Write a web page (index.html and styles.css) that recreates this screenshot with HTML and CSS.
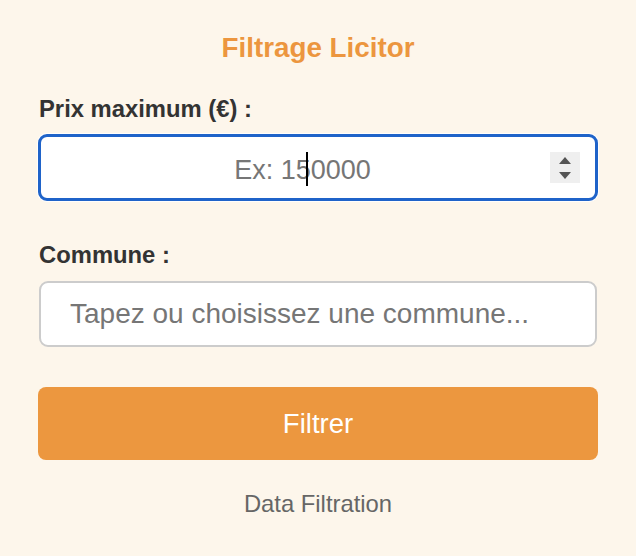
FILE: index.html
```html
<!DOCTYPE html>
<html lang="fr">
<head>
<meta charset="utf-8">
<title>Filtrage Licitor</title>
<link rel="stylesheet" href="styles.css">
</head>
<body>
<main class="panel">
  <h1 class="title">Filtrage Licitor</h1>
  <form class="filter-form">
    <label class="label label-price" for="prix">Prix maximum (€) :</label>
    <div class="field field-focused">
      <input id="prix" class="field-input field-input-center" type="text" placeholder="Ex: 150000">
      <span class="caret"></span>
      <div class="spinner">
        <span class="arrow arrow-up"></span>
        <span class="arrow arrow-down"></span>
      </div>
    </div>
    <label class="label label-commune" for="commune">Commune :</label>
    <div class="field field-plain">
      <input id="commune" class="field-input field-input-left" type="text" placeholder="Tapez ou choisissez une commune...">
    </div>
    <button class="submit" type="button">Filtrer</button>
  </form>
  <p class="footer">Data Filtration</p>
</main>
</body>
</html>
```
FILE: styles.css
```css
html, body {
  margin: 0;
  padding: 0;
  background: #fdf6eb;
}
body {
  font-family: "Liberation Sans", Arial, Helvetica, sans-serif;
  color: #333333;
}
.panel {
  padding: 32px 38px 0 38px;
  display: flex;
  flex-direction: column;
}
.title {
  margin: 0;
  font-size: 27.8px;
  line-height: 32px;
  font-weight: bold;
  color: #ec963f;
  text-align: center;
}
.filter-form {
  display: flex;
  flex-direction: column;
}
.label {
  display: block;
  font-size: 23.8px;
  line-height: 26px;
  font-weight: bold;
  color: #333333;
  padding-left: 1px;
}
.label-price {
  margin-top: 32px;
}
.label-commune {
  margin-top: 41px;
}
.field {
  position: relative;
  box-sizing: border-box;
  display: flex;
  align-items: center;
  background: #ffffff;
  border-radius: 9px;
  margin-top: 12px;
}
.field-focused {
  height: 67px;
  border: 3px solid #1f63c9;
  box-shadow: 0 0 0 1px rgba(255, 255, 255, 0.9);
}
.field-plain {
  height: 66px;
  border: 2px solid #cccccc;
  margin-top: 13px;
  margin-left: 1px;
  margin-right: 1px;
}
.field-input {
  flex: 1;
  min-width: 0;
  border: none;
  outline: none;
  background: transparent;
  font-family: "Liberation Sans", Arial, Helvetica, sans-serif;
  font-size: 27px;
  color: #333333;
  padding: 0;
}
.field-input::placeholder {
  color: #767676;
  opacity: 1;
}
.field-input-center {
  text-align: center;
  padding-left: 14px;
  padding-top: 6px;
}
.field-input-left {
  padding-left: 29px;
  font-size: 28px;
}
.caret {
  position: absolute;
  left: 265px;
  top: 15px;
  width: 2px;
  height: 34px;
  background: #000000;
}
.spinner {
  width: 30px;
  height: 31px;
  margin: 0 15px 0 0;
  background: #efefef;
  display: flex;
  flex-direction: column;
  align-items: center;
  justify-content: center;
  gap: 8px;
}
.arrow {
  width: 0;
  height: 0;
  border-left: 6px solid transparent;
  border-right: 6px solid transparent;
}
.arrow-up {
  border-bottom: 7px solid #555555;
}
.arrow-down {
  border-top: 7px solid #555555;
}
.submit {
  margin-top: 40px;
  height: 73px;
  border: none;
  border-radius: 8px;
  background: #ec973f;
  color: #ffffff;
  font-family: "Liberation Sans", Arial, Helvetica, sans-serif;
  font-size: 27.5px;
  padding: 0;
}
.footer {
  margin: 31px 0 0 0;
  font-size: 23.8px;
  line-height: 26px;
  color: #666666;
  text-align: center;
}
```
